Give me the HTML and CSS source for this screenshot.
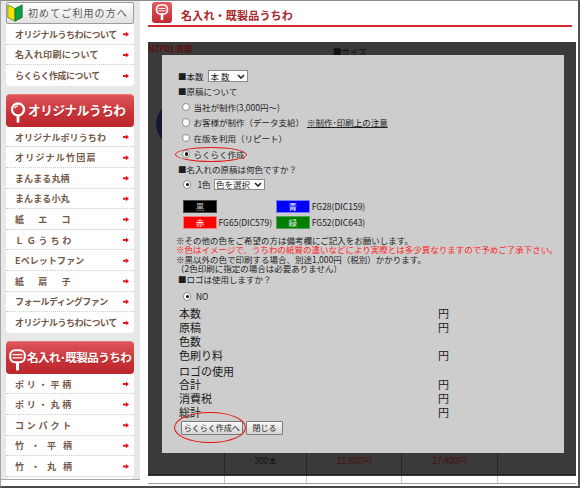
FILE: index.html
```html
<!DOCTYPE html>
<html lang="ja">
<head>
<meta charset="utf-8">
<title>名入れ・既製品うちわ</title>
<link rel="stylesheet" href="styles.css">
</head>
<body>
<div class="frame">
  <aside class="side">
    <a class="first">
      <svg class="leaf" width="16" height="18" viewBox="0 0 16 18"><path d="M0.8 0.8 L8 4.6 V17.2 L0.8 13.4Z" fill="#f3e300" stroke="#4d7d2d" stroke-width="0.8"/><path d="M8 4.6 L15.2 0.8 V13.4 L8 17.2Z" fill="#0aa045" stroke="#2c6a2c" stroke-width="0.8"/></svg>
      <span>初めてご利用の方へ</span>
    </a>
    <ul class="panel">
      <li><span class="ls-a">オリジナルうちわについて</span></li>
      <li><span class="ls-b">名入れ印刷について</span></li>
      <li><span class="ls-a">らくらく作成について</span></li>
    </ul>
    <div class="rhead">
      <svg class="ricon" width="16" height="21" viewBox="0 0 16 21"><circle cx="8" cy="7.5" r="6" fill="none" stroke="#fff" stroke-width="2.3"/><path d="M4.6 6.2 A3.8 3.8 0 0 1 8 3.8" fill="none" stroke="#fff" stroke-width="1.2"/><rect x="6.6" y="13.4" width="2.8" height="7.4" rx="1" fill="#fff"/></svg>
      <span>オリジナルうちわ</span>
    </div>
    <ul class="panel">
      <li><span class="ls-0">オリジナルポリうちわ</span></li>
      <li><span class="ls-c">オリジナル竹団扇</span></li>
      <li><span class="ls-0">まんまる丸柄</span></li>
      <li><span class="ls-0">まんまる小丸</span></li>
      <li><span class="ls-w">紙エコ</span></li>
      <li><span class="ls-d">ＬＧうちわ</span></li>
      <li><span class="ls-0">Eベレットファン</span></li>
      <li><span class="ls-w">紙扇子</span></li>
      <li><span class="ls-a">フォールディングファン</span></li>
      <li><span class="ls-a">オリジナルうちわについて</span></li>
    </ul>
    <div class="rhead rhead2">
      <svg class="ricon" width="17" height="22" viewBox="0 0 17 22"><rect x="1.2" y="1.2" width="14.6" height="12" rx="5" fill="none" stroke="#fff" stroke-width="2"/><path d="M3.5 5.6 H13.5 M3.5 8.8 H13.5" stroke="#fff" stroke-width="1.3"/><rect x="7" y="13" width="3" height="8.5" rx="1" fill="#fff"/></svg>
      <span>名入れ･既製品うちわ</span>
    </div>
    <ul class="panel last">
      <li><span class="ls-d">ポリ・平柄</span></li>
      <li><span class="ls-d">ポリ・丸柄</span></li>
      <li><span class="ls-d">コンパクト</span></li>
      <li><span class="ls-e">竹・平柄</span></li>
      <li><span class="ls-e">竹・丸柄</span></li>
    </ul>
  </aside>

  <main class="main">
    <div class="mhead">
      <div class="mtitle">
        <span class="micon"><svg width="20" height="21" viewBox="0 0 20 21"><rect x="4.6" y="3" width="10.8" height="9" rx="3.8" fill="none" stroke="#fff" stroke-width="1.7"/><path d="M6.5 6.4 H13.5 M6.5 8.8 H13.5" stroke="#fff" stroke-width="1"/><rect x="8.7" y="11.6" width="2.6" height="6.6" rx="0.8" fill="#fff"/></svg></span>
        <h1>名入れ・既製品うちわ</h1>
      </div>
    </div>

    <div class="stage">
      <div class="blob"></div>
      <div class="stop">
        <span class="code">NZP01 青祭</span>
        <span class="size">■サイズ</span>
      </div>

      <div class="modal">
        <div class="q q1">■本数<span class="sel s1"><span class="st">本数</span><svg width="8" height="5" viewBox="0 0 8 5"><polyline points="1,1 4,4 7,1" fill="none" stroke="#222" stroke-width="1.6"/></svg></span></div>
        <div class="q q2">■原稿について</div>
        <div class="opt"><span class="rd"></span>当社が制作(3,000円～)</div>
        <div class="opt"><span class="rd"></span>お客様が制作（データ支給）<a class="lnk">※制作･印刷上の注意</a></div>
        <div class="opt"><span class="rd"></span>在版を利用（リピート）</div>
        <div class="opt"><span class="rd on"></span>らくらく作成</div>
        <div class="q q3">■名入れの原稿は何色ですか？</div>
        <div class="opt1"><span class="rd on m6"></span>1色<span class="sel s2"><span>色を選択</span><svg width="8" height="5" viewBox="0 0 8 5"><polyline points="1,1 4,4 7,1" fill="none" stroke="#222" stroke-width="1.6"/></svg></span></div>
        <div class="colors">
          <span class="cb k">黒</span><span class="fg"></span>
          <span class="cb b">青</span><span class="fg">FG28(DIC159)</span>
          <span class="cb r">赤</span><span class="fg">FG65(DIC579)</span>
          <span class="cb g">緑</span><span class="fg">FG52(DIC643)</span>
        </div>
        <div class="notes">
          <p>※その他の色をご希望の方は備考欄にご記入をお願いします。</p>
          <p class="red">※色はイメージで、うちわの紙質の違いなどにより実際とは多少異なりますので予めご了承下さい。</p>
          <p>※黒以外の色で印刷する場合、別途1,000円（税別）かかります。</p>
          <p>（2色印刷に指定の場合は必要ありません）</p>
        </div>
        <div class="q q4">■ロゴは使用しますか？</div>
        <div class="opt2"><span class="rd on m4"></span>NO</div>
        <div class="sum">
          <div class="sr"><span>本数</span><span>円</span></div>
          <div class="sr"><span>原稿</span><span>円</span></div>
          <div class="sr"><span>色数</span><span></span></div>
          <div class="sr"><span>色刷り料</span><span>円</span></div>
          <div class="sr gap"><span>ロゴの使用</span><span></span></div>
          <div class="sr"><span>合計</span><span>円</span></div>
          <div class="sr"><span>消費税</span><span>円</span></div>
          <div class="sr"><span>総計</span><span>円</span></div>
        </div>
        <div class="btns">
          <button class="btn b1">らくらく作成へ</button>
          <button class="btn b2">閉じる</button>
        </div>
        <span class="ring ring1"></span>
        <span class="ring ring2"></span>
      </div>

      <div class="trow dark">
        <span></span>
        <span class="qty">300本</span>
        <span class="pr">21,800円</span>
        <span class="pr">27,400円</span>
        <span></span>
      </div>
    </div>
    <div class="trow light">
      <span></span><span></span><span></span><span></span><span></span>
    </div>
  </main>
</div>
</body>
</html>
```

FILE: styles.css
```css
* { box-sizing: border-box; margin: 0; padding: 0; }
html, body { width: 580px; height: 488px; overflow: hidden; }
body {
  font-family: "Noto Sans CJK JP", "Noto Sans", sans-serif;
  background: #fff;
  color: #1e1e1e;
}

.frame {
  width: 580px;
  height: 488px;
  display: flex;
  background: #fff;
  overflow: hidden;
  border-top: 1px solid #8c8c8c;
  border-left: 1px solid #a4a4a4;
  border-right: 2px solid #505050;
  border-bottom: 2px solid #4a4a4a;
}

/* ---------- sidebar ---------- */
.side {
  width: 139px;
  height: 479px;
  flex: none;
  background: #e8e8e8;
  padding: 1px 6px 0 5px;
  border-bottom: 1px solid #a8a8a8;
  display: flex;
  flex-direction: column;
  overflow: hidden;
}
.first {
  height: 22px;
  flex: none;
  display: flex;
  align-items: center;
  border: 1px solid #9c9c9c;
  border-radius: 2px;
  background: linear-gradient(#ffffff, #e2e2e2);
  color: #585858;
  font-size: 10px;
  letter-spacing: 1.1px;
  line-height: 1;
}
.leaf { display: block; margin-left: 0; }
.first span { margin-left: 5px; }

.panel {
  list-style: none;
  background: #fff;
  border-radius: 0 0 4px 4px;
  flex: none;
}
.panel li {
  height: 20.6px;
  display: flex;
  align-items: center;
  justify-content: space-between;
  padding: 1px 5px 0 9px;
  border-bottom: 1px dotted #cbcbcb;
  font-size: 9px;
  font-weight: 700;
  color: #735848;
  line-height: 1;
  white-space: nowrap;
}
.panel li:last-child { border-bottom: none; }
.panel.last { flex: 1; }
.panel.last li:last-child { border-bottom: 1px dotted #cbcbcb; }
.panel li::after {
  content: "";
  width: 6px;
  height: 5px;
  flex: none;
  background: #e3161e;
  clip-path: polygon(0 30%, 48% 30%, 48% 0, 100% 50%, 48% 100%, 48% 70%, 0 70%);
}

.ls-a { letter-spacing: -0.5px; }
.ls-0 { letter-spacing: 0.1px; }
.ls-b { letter-spacing: 0.35px; }
.ls-c { letter-spacing: 1.2px; }
.ls-d { letter-spacing: 2.8px; }
.ls-e { letter-spacing: 7px; }
.ls-w { letter-spacing: 14.3px; }

.rhead {
  margin-top: 8px;
  height: 33px;
  flex: none;
  border-radius: 4px;
  background: linear-gradient(#dd565b, #c93439 55%, #b9262c);
  border-top: 1px solid #e8797d;
  display: flex;
  align-items: center;
  padding-left: 4px;
  color: #fff;
  font-size: 12.6px;
  font-weight: 700;
  letter-spacing: -0.4px;
  line-height: 1;
  text-shadow: 0 1px 0 rgba(90, 0, 0, 0.35);
  white-space: nowrap;
  overflow: hidden;
}
.ricon { display: block; margin-top: 4px; flex: none; }
.rhead span { margin-left: 2px; }
.rhead2 { padding-left: 3px; font-size: 11.6px; letter-spacing: -0.6px; }
.rhead2 span { margin-left: 1px; }

/* ---------- main ---------- */
.main {
  flex: 1;
  display: flex;
  flex-direction: column;
  min-width: 0;
}
.mhead {
  height: 41px;
  flex: none;
  padding: 1px 6px 0 8px;
}
.mtitle {
  height: 25px;
  display: flex;
  align-items: flex-start;
  padding-left: 4px;
  border-bottom: 2px solid #d42a2a;
}
.micon {
  width: 20px;
  height: 21px;
  flex: none;
  border-radius: 3px;
  background: linear-gradient(#e35c61, #c02a30);
}
.micon svg { display: block; }
.mtitle h1 {
  margin-left: 9px;
  padding-top: 8px;
  font-size: 11px;
  line-height: 11px;
  font-weight: 700;
  color: #a8272c;
  letter-spacing: 0.2px;
}

.stage {
  position: relative;
  margin-left: 8px;
  width: 428px;
  height: 434px;
  flex: none;
  background: #3a3a3a;
}
.blob {
  position: absolute;
  left: 8px;
  top: 57px;
  width: 60px;
  height: 50px;
  border-radius: 50%;
  background: #121832;
}
.stop {
  position: relative;
  height: 13px;
  display: grid;
  grid-template-columns: 185px auto;
}
.code {
  font-size: 8.5px;
  line-height: 13px;
  font-weight: 700;
  color: #5c1010;
  letter-spacing: -0.2px;
}
.size {
  margin-top: 4px;
  font-size: 8.5px;
  line-height: 10px;
  color: #121212;
}

/* ---------- modal ---------- */
.modal {
  position: relative;
  z-index: 1;
  margin-left: 14px;
  width: 402px;
  height: 398px;
  background: #cdcdcd;
  padding: 14px 0 0 14px;
  font-size: 8.5px;
  line-height: 1;
  color: #1e1e1e;
  white-space: nowrap;
}
.q { display: flex; align-items: center; padding-left: 2px; }
.q1 { height: 14px; }
.q2 { height: 16px; }
.q3 { height: 14.2px; }
.q4 { height: 14px; }
.opt { height: 15.7px; display: flex; align-items: center; padding-left: 6px; }
.opt1 { height: 17px; display: flex; align-items: center; padding-left: 7px; }
.opt2 { margin-top: 2px; height: 15.4px; display: flex; align-items: center; padding-left: 7px; }

.rd {
  position: relative;
  width: 8.4px;
  height: 8.4px;
  flex: none;
  border-radius: 50%;
  background: #fff;
  border: 1px solid #8c8c8c;
  margin-right: 3px;
}
.rd.on::after {
  content: "";
  position: absolute;
  left: 50%;
  top: 50%;
  width: 3.4px;
  height: 3.4px;
  margin: -1.7px 0 0 -1.7px;
  border-radius: 50%;
  background: #111;
}
.rd.m6 { margin-right: 6px; }
.rd.m4 { margin-right: 4.5px; }

.lnk {
  margin-left: 3px;
  color: #1e1e1e;
  text-decoration: underline;
}

.sel {
  display: inline-flex;
  align-items: center;
  justify-content: space-between;
  height: 11.5px;
  border: 1px solid #8a8a8a;
  background: #fff;
  padding: 0 2px 0 1.5px;
}
.sel svg { display: block; }
.s1 { width: 40px; margin-left: 4.5px; }
.s1 .st { letter-spacing: 2px; }
.s2 { width: 51px; margin-left: 3px; }

.colors {
  margin-top: 7px;
  padding-left: 7px;
  display: grid;
  grid-template-columns: 35.5px 57.2px 36px auto;
  row-gap: 2.7px;
  align-items: center;
}
.cb {
  width: 34px;
  height: 13.3px;
  display: flex;
  align-items: center;
  justify-content: center;
  border: 1px solid;
  color: #fff;
}
.cb.k { background: #000; border-color: #4a4a4a; color: #c8c8c8; }
.cb.b { background: #0000ff; border-color: #7a7aff; }
.cb.r { background: #ff0000; border-color: #ff7a7a; }
.cb.g { background: #008000; border-color: #55a055; color: #e8e8e8; }
.fg { color: #222; }

.notes { margin-top: 7.15px; line-height: 9.1px; }
.notes .red { color: #ff2424; }

.sum { margin-top: 3px; padding-left: 3px; width: 273px; }
.sr {
  height: 13.7px;
  display: flex;
  justify-content: space-between;
  align-items: center;
  font-size: 11px;
  color: #1a1a1a;
}
.sr.gap { margin-top: 2.3px; }

.btns { margin-top: 2.35px; padding-left: 4.7px; display: flex; gap: 3.3px; }
.btn {
  height: 13.3px;
  padding: 0;
  border: 1px solid #7a7a7a;
  border-radius: 1px;
  background: linear-gradient(#f7f7f7, #d6d6d6);
  font-family: inherit;
  font-size: 8px;
  line-height: 1;
  color: #222;
  display: flex;
  align-items: center;
  justify-content: center;
}
.b1 { width: 62px; }
.b2 { width: 37px; }

.ring {
  position: absolute;
  border: 1.5px solid #e41616;
  border-radius: 50%;
}
.ring1 { left: 13px; top: 91.5px; width: 72px; height: 15px; }
.ring2 { left: 12px; top: 356.7px; width: 72px; height: 31.6px; }

/* ---------- underlying table ---------- */
.trow {
  display: grid;
  grid-template-columns: 76px 82px 95px 96px 1fr;
  font-size: 8.5px;
  line-height: 11px;
  text-align: center;
}
.trow.dark {
  height: 22px;
  border-bottom: 1px solid #1e1e1e;
}
.trow.dark span { padding-top: 2px; }
.trow.dark span + span { border-left: 1px solid #252525; }
.qty { color: #121212; }
.pr { color: #4e0c0c; }
.trow.light {
  margin-left: 8px;
  width: 428px;
  height: 8px;
  border-bottom: 1px solid #a0a0a0;
}
.trow.light span + span { border-left: 1px solid #c4c4c4; }
```
